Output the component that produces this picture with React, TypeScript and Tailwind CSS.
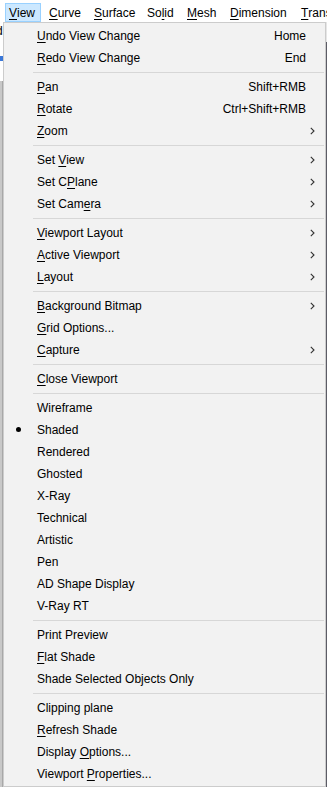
import React from "react";

type Entry =
  | "sep"
  | { label: string; u?: number; sc?: string; sub?: boolean; bullet?: boolean };

const entries: Entry[] = [
  { label: "Undo View Change", u: 0, sc: "Home" },
  { label: "Redo View Change", u: 0, sc: "End" },
  "sep",
  { label: "Pan", u: 0, sc: "Shift+RMB" },
  { label: "Rotate", u: 0, sc: "Ctrl+Shift+RMB" },
  { label: "Zoom", u: 0, sub: true },
  "sep",
  { label: "Set View", u: 4, sub: true },
  { label: "Set CPlane", u: 5, sub: true },
  { label: "Set Camera", u: 7, sub: true },
  "sep",
  { label: "Viewport Layout", u: 0, sub: true },
  { label: "Active Viewport", u: 0, sub: true },
  { label: "Layout", u: 0, sub: true },
  "sep",
  { label: "Background Bitmap", u: 0, sub: true },
  { label: "Grid Options...", u: 0 },
  { label: "Capture", u: 0, sub: true },
  "sep",
  { label: "Close Viewport", u: 0 },
  "sep",
  { label: "Wireframe" },
  { label: "Shaded", bullet: true },
  { label: "Rendered" },
  { label: "Ghosted" },
  { label: "X-Ray" },
  { label: "Technical" },
  { label: "Artistic" },
  { label: "Pen" },
  { label: "AD Shape Display" },
  { label: "V-Ray RT" },
  "sep",
  { label: "Print Preview" },
  { label: "Flat Shade", u: 0 },
  { label: "Shade Selected Objects Only" },
  "sep",
  { label: "Clipping plane" },
  { label: "Refresh Shade", u: 0 },
  { label: "Display Options...", u: 8 },
  { label: "Viewport Properties...", u: 9 },
];

function Mn({ label, u }: { label: string; u?: number }) {
  if (u === undefined) return <>{label}</>;
  return (
    <>
      {label.slice(0, u)}
      <span className="underline underline-offset-[2px]">{label[u]}</span>
      {label.slice(u + 1)}
    </>
  );
}

const bar: { label: string; u: number; w: string; pl: string; active?: boolean }[] = [
  { label: "View", u: 0, w: "w-[36px]", pl: "pl-[3px]", active: true },
  { label: "Curve", u: 0, w: "w-[45px]", pl: "pl-[7px]" },
  { label: "Surface", u: 0, w: "w-[53px]", pl: "pl-[7px]" },
  { label: "Solid", u: 2, w: "w-[40px]", pl: "pl-[7px]" },
  { label: "Mesh", u: 0, w: "w-[43px]", pl: "pl-[7px]" },
  { label: "Dimension", u: 0, w: "w-[71px]", pl: "pl-[7px]" },
  { label: "Transform", u: 0, w: "w-[80px]", pl: "pl-[7px]" },
];

function Chevron() {
  return (
    <svg width="5" height="8" viewBox="0 0 5 8" className="mr-[10px]">
      <path d="M0.8 0.8 L4 4 L0.8 7.2" fill="none" stroke="#333" strokeWidth="1.1" />
    </svg>
  );
}

export default function App() {
  return (
    <div className="w-[327px] h-[787px] overflow-hidden bg-white text-[12px] text-black font-['Liberation_Sans',Arial,sans-serif]">
      <div className="h-[22px] flex pl-[5px] whitespace-nowrap">
        {bar.map((b) => (
          <div
            key={b.label}
            className={`${b.w} ${b.pl} shrink-0 mt-[3px] h-[19px] flex items-center ${
              b.active ? "bg-[#cce8ff] border border-[#99d1ff]" : "border border-transparent"
            }`}
          >
            <Mn label={b.label} u={b.u} />
          </div>
        ))}
      </div>
      <div className="flex h-[765px]">
        <div className="w-[3px] flex flex-col">
          <div className="h-[34px] bg-white overflow-hidden">
            <div className="mt-[3px] -ml-[4px] leading-[12px]">d</div>
          </div>
          <div className="h-[5px] bg-[#3b78d8]" />
          <div className="h-[20px] bg-white" />
          <div className="flex-1 bg-[#c8c8c8] border-r border-[#a8a8a8]" />
        </div>
        <div className="w-[323px] h-[765px] bg-[#f2f2f2] border border-[#cccccc] pt-[2px] pb-[1px] flex flex-col">
          {entries.map((e, i) =>
            e === "sep" ? (
              <div key={i} className="h-[7px] pt-[3px] pl-[29px] pr-[1px]">
                <div className="h-px bg-[#d7d7d7]" />
              </div>
            ) : (
              <div key={i} className="h-[22px] shrink-0 flex items-center whitespace-nowrap">
                <div className="w-[33px] h-full flex items-center justify-center pr-[4px]">
                  {e.bullet && <div className="w-[5px] h-[5px] rounded-full bg-black mt-[-1px]" />}
                </div>
                <div className="flex-1">
                  <Mn label={e.label} u={e.u} />
                </div>
                {e.sc && <div className="mr-[19px]">{e.sc}</div>}
                {e.sub && <Chevron />}
              </div>
            )
          )}
        </div>
        <div className="w-[1px] flex flex-col">
          <div className="h-[20px] bg-[#e6e6e6]" />
          <div className="flex-1 bg-[#5c5c66]" />
        </div>
      </div>
    </div>
  );
}
